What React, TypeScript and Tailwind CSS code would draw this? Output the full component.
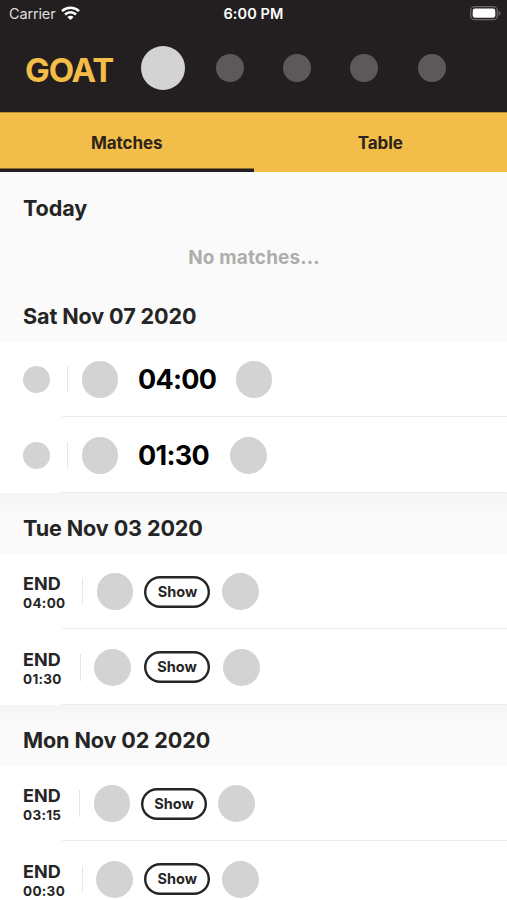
import React from "react";
import clsx from "clsx";

interface Match {
  time: string;
  ended?: boolean;
  infoClass: string;
  homeClass: string;
  scoreClass: string;
}

interface MatchDay {
  date: string;
  matches: Match[];
}

const days: MatchDay[] = [
  {
    date: "Sat Nov 07 2020",
    matches: [
      { time: "04:00", infoClass: "w-[44px]", homeClass: "ml-[13.5px]", scoreClass: "pl-[19.5px] w-[117.3px]" },
      { time: "01:30", infoClass: "w-[44px]", homeClass: "ml-[13.5px]", scoreClass: "pl-[19.5px] w-[112px]" },
    ],
  },
  {
    date: "Tue Nov 03 2020",
    matches: [
      { time: "04:00", ended: true, infoClass: "w-[59px]", homeClass: "ml-[13.5px]", scoreClass: "pl-[11px] w-[88.5px]" },
      { time: "01:30", ended: true, infoClass: "w-[56.5px]", homeClass: "ml-[13.2px]", scoreClass: "pl-[13.3px] w-[92.5px]" },
    ],
  },
  {
    date: "Mon Nov 02 2020",
    matches: [
      { time: "03:15", ended: true, infoClass: "w-[56px]", homeClass: "ml-[13.5px]", scoreClass: "pl-[10.6px] w-[88px]" },
      { time: "00:30", ended: true, infoClass: "w-[58.5px]", homeClass: "ml-[13.5px]", scoreClass: "pl-[11.4px] w-[89px]" },
    ],
  },
];

const StatusBar = () => (
  <div className="flex h-[27px] items-center justify-between pl-[9px] pr-[6px] text-[14.5px] text-white">
    <div className="flex w-[120px] items-center gap-[6px]">
      <span className="-tracking-[0.15px] text-[#dedede]">Carrier</span>
      <svg width="19" height="15" viewBox="0 0 19 15" fill="none" stroke="white" strokeWidth="2.5">
        <path d="M1 5.1C5.7 .6 13.3 .6 18 5.1" />
        <path d="M4 8.5C7.1 5.5 11.9 5.5 15 8.5" />
        <path d="M9.5 14L6.4 10.9C8.2 9.3 10.8 9.3 12.6 10.9Z" fill="white" stroke="none" />
      </svg>
    </div>
    <span className="-ml-[3px] font-semibold tracking-[0.1px]">6:00 PM</span>
    <div className="flex w-[120px] justify-end">
      <svg width="31" height="15" viewBox="0 0 31 15" fill="none">
        <rect x="0.7" y="0.7" width="26.6" height="13" rx="4" stroke="#6b6869" strokeWidth="1.3" />
        <rect x="2.7" y="2.6" width="22.6" height="9.2" rx="2.2" fill="white" />
        <path d="M28.6 5C31 5.5 31 9 28.6 9.5Z" fill="#6b6869" />
      </svg>
    </div>
  </div>
);

const Header = () => (
  <header className="h-[112px] bg-[#231f20]">
    <StatusBar />
    <div className="flex h-[82px] items-center pl-[25px]">
      <h1 className="w-[115.5px] pt-[4px] text-[33px] font-[650] leading-none tracking-[-1.1px] text-[#f3bd48]">
        GOAT
      </h1>
      <div className="size-[44px] rounded-full bg-[#d3d3d3]" />
      <div className="ml-[31.5px] flex gap-[39.2px]">
        {[1, 2, 3, 4].map((league) => (
          <div key={league} className="size-[28px] rounded-full bg-[#5d595a]" />
        ))}
      </div>
    </div>
  </header>
);

const Tabs = () => (
  <nav className="grid h-[60px] grid-cols-2 border-t border-[#b98e37] bg-[#f2bd49] text-[17px] font-[650] tracking-[-0.1px] text-[#2c2419]">
    <button className="pt-[2px] shadow-[inset_0_-3.6px_#231f20]">Matches</button>
    <button className="pt-[2px]">Table</button>
  </nav>
);

const MatchRow: React.FC<{ match: Match }> = ({ match }) => (
  <div className="flex h-[75.75px] flex-col bg-white">
    <div className="flex flex-1 items-center pl-[23px] pt-[2px]">
      <div className={clsx("flex shrink-0 items-center", match.infoClass)}>
        {match.ended ? (
          <div className="pt-[3px] text-[#252525]">
            <p className="text-[18px] font-[650] leading-[20px] tracking-[0.1px]">END</p>
            <p className="text-[13.5px] font-[650] leading-[18px] tracking-[0.3px]">{match.time}</p>
          </div>
        ) : (
          <div className="size-[27px] rounded-full bg-[#d3d3d3]" />
        )}
      </div>
      <div className="h-[27px] w-[1.3px] bg-[#e6e6e6]" />
      <div className={clsx("size-[36.7px] shrink-0 rounded-full bg-[#d3d3d3]", match.homeClass)} />
      <div className={clsx("flex shrink-0 items-center", match.scoreClass)}>
        {match.ended ? (
          <button className="h-[32px] w-[66px] shrink-0 rounded-full text-[14.5px] font-[650] text-[#252525] shadow-[inset_0_0_0_2.4px_#252525]">
            Show
          </button>
        ) : (
          <span className="text-[27px] font-[650] leading-none tracking-[-0.7px] text-black">{match.time}</span>
        )}
      </div>
      <div className="size-[36.7px] shrink-0 rounded-full bg-[#d3d3d3]" />
    </div>
    <div className="ml-[62px] h-[1.35px] shrink-0 bg-[#ececec]" />
  </div>
);

const DayTitle: React.FC<{ title: string }> = ({ title }) => (
  <h2 className="text-[21.6px] font-[650] leading-[26px] tracking-[-0.12px] text-[#252525]">{title}</h2>
);

export default function App() {
  return (
    <div className="h-[900px] w-[507px] overflow-hidden bg-[#fafafa] font-['Inter',sans-serif]">
      <Header />
      <Tabs />
      <section className="h-[121px] pt-[23px]">
        <div className="pl-[23px]">
          <DayTitle title="Today" />
        </div>
        <p className="pl-[1px] pt-[24px] text-center text-[19px] font-[650] leading-[26px] tracking-[0.15px] text-[#adadad]">
          No matches...
        </p>
      </section>
      {days.map((day, i) => (
        <section key={day.date}>
          <div
            className={clsx(
              "pl-[23px]",
              i === 0 ? "h-[48.4px] pt-[10px]" : "h-[60.5px] bg-linear-to-b from-[#f5f5f5] to-[#fafafa] to-35% pt-[22.5px]"
            )}
          >
            <DayTitle title={day.date} />
          </div>
          {day.matches.map((match) => (
            <MatchRow key={match.time} match={match} />
          ))}
        </section>
      ))}
    </div>
  );
}
